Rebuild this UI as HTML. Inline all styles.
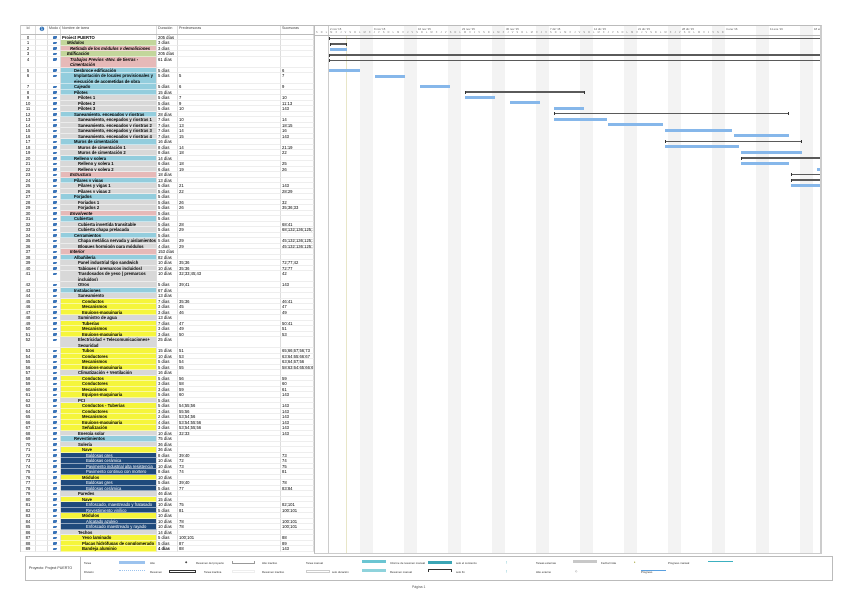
<!DOCTYPE html>
<html><head><meta charset="utf-8"><style>
*{margin:0;padding:0;box-sizing:border-box}
body{width:848px;height:600px;background:#fff;position:relative;overflow:hidden;font-family:"Liberation Sans",sans-serif;color:#000}
#tbl{position:absolute;left:20px;top:25px;width:294px;border-left:1px solid #ccc}
.r{display:grid;grid-template-columns:15px 12px 13px 96px 21px 103px 33px;height:5.51px;font-size:4.2px;line-height:5.51px;white-space:nowrap}
.r.d{height:11.02px}
.r>i{font-style:normal;border-right:1px solid #ddd;border-bottom:1px solid #eee;overflow:hidden;padding-left:1px}
.r>i:first-child{text-align:center;padding:0}
.r>i.n{font-weight:bold;border-bottom:1px solid rgba(255,255,255,.5)}
.d>i.n{white-space:normal;line-height:5.2px;padding-top:.3px}
.h{height:9.5px;border-top:1px solid #bbb;border-bottom:1px solid #bbb;line-height:4.5px;font-size:3.6px;color:#444}
.h>i{border-bottom:none!important}
.m{display:block;width:4px;height:2.5px;background:#3a74b8;margin:1.5px auto 0;border-radius:1px 0 2px 0}
.g{background:#c3d69b}.p{background:#e6b9b8}.b{background:#93cddd}.y{background:#f5f53b}.k{background:#d8d8d8}.db{background:#1f4a7c;color:#fff;font-weight:normal!important}
.it{font-style:italic!important}
#gantt{position:absolute;left:314px;top:25px;width:508px;height:529px;border-left:1px solid #bbb;border-right:2px solid #ccc;border-top:1px solid #bbb;border-bottom:1px solid #ccc;overflow:hidden}
.st{position:absolute;top:0;width:13px;height:529px;background:#f3f3f3}
.gh{position:absolute;left:0;top:0;width:508px;height:9.5px;border-bottom:1px solid #bbb}
.wl{position:absolute;top:0.5px;font-size:2.8px;color:#555}
.dl{position:absolute;top:5px;font-size:2.4px;color:#777;letter-spacing:3.2px}
.bar{position:absolute;height:3px;background:#86b7ea}
.sm{position:absolute;height:1.5px;background:#5a5a5a}
.sm:before,.sm:after{content:"";position:absolute;top:-.5px;width:1.2px;height:3px;background:#333}
.sm:before{left:0}.sm:after{right:0}
#leg{position:absolute;left:25px;top:556px;width:808px;height:25px;border:1px solid #bbb;font-size:3px;color:#333}
#leg .lc{position:absolute;left:0;top:0;width:55px;height:23px;border-right:1px solid #bbb;line-height:23px;padding-left:3px;font-size:3.6px}
.li{position:absolute;font-size:2.8px}
.ls{position:absolute;height:2.5px}
</style></head><body>
<div id="tbl">
<div class="r h"><i>Id</i><i style="text-align:center;font-size:6px;color:#2a6db5;line-height:9px">&#10102;</i><i>Modo de tarea</i><i>Nombre de tarea</i><i>Duración</i><i>Predecesoras</i><i>Sucesoras</i></div>
<div class="r"><i>0</i><i></i><i><b class="m"></b></i><i class="n" style="padding-left:1px">Project PUERTO</i><i>205 días</i><i></i><i></i></div>
<div class="r"><i>1</i><i></i><i><b class="m"></b></i><i class="n g it" style="padding-left:6px">Módulos</i><i>3 días</i><i></i><i></i></div>
<div class="r"><i>2</i><i></i><i><b class="m"></b></i><i class="n p it" style="padding-left:9px">Retirada de los módulos y demoliciones</i><i>3 días</i><i></i><i></i></div>
<div class="r"><i>3</i><i></i><i><b class="m"></b></i><i class="n g it" style="padding-left:6px">Edificación</i><i>205 días</i><i></i><i></i></div>
<div class="r d"><i>4</i><i></i><i><b class="m"></b></i><i class="n p it" style="padding-left:9px">Trabajos Previos -Mov. de tierras - Cimentación</i><i>61 días</i><i></i><i></i></div>
<div class="r"><i>5</i><i></i><i><b class="m"></b></i><i class="n b" style="padding-left:13px">Desbroce edificación</i><i>5 días</i><i></i><i>6</i></div>
<div class="r d"><i>6</i><i></i><i><b class="m"></b></i><i class="n b" style="padding-left:13px">Implantación de locales provisionales y ejecución de acometidas de obra</i><i>5 días</i><i>5</i><i>7</i></div>
<div class="r"><i>7</i><i></i><i><b class="m"></b></i><i class="n b" style="padding-left:13px">Cajeado</i><i>5 días</i><i>6</i><i>9</i></div>
<div class="r"><i>8</i><i></i><i><b class="m"></b></i><i class="n b" style="padding-left:13px">Pilotes</i><i>15 días</i><i></i><i></i></div>
<div class="r"><i>9</i><i></i><i><b class="m"></b></i><i class="n k" style="padding-left:17px">Pilotes 1</i><i>5 días</i><i>7</i><i>10</i></div>
<div class="r"><i>10</i><i></i><i><b class="m"></b></i><i class="n k" style="padding-left:17px">Pilotes 2</i><i>5 días</i><i>9</i><i>11;13</i></div>
<div class="r"><i>11</i><i></i><i><b class="m"></b></i><i class="n k" style="padding-left:17px">Pilotes 3</i><i>5 días</i><i>10</i><i>143</i></div>
<div class="r"><i>12</i><i></i><i><b class="m"></b></i><i class="n b" style="padding-left:13px">Saneamiento, encepados y riostras</i><i>28 días</i><i></i><i></i></div>
<div class="r"><i>13</i><i></i><i><b class="m"></b></i><i class="n k" style="padding-left:17px">Saneamiento, encepados y riostras 1</i><i>7 días</i><i>10</i><i>14</i></div>
<div class="r"><i>14</i><i></i><i><b class="m"></b></i><i class="n k" style="padding-left:17px">Saneamiento, encepados y riostras 2</i><i>7 días</i><i>13</i><i>18;15</i></div>
<div class="r"><i>15</i><i></i><i><b class="m"></b></i><i class="n k" style="padding-left:17px">Saneamiento, encepados y riostras 3</i><i>7 días</i><i>14</i><i>16</i></div>
<div class="r"><i>16</i><i></i><i><b class="m"></b></i><i class="n k" style="padding-left:17px">Saneamiento, encepados y riostras 4</i><i>7 días</i><i>15</i><i>143</i></div>
<div class="r"><i>17</i><i></i><i><b class="m"></b></i><i class="n b" style="padding-left:13px">Muros de cimentación</i><i>16 días</i><i></i><i></i></div>
<div class="r"><i>18</i><i></i><i><b class="m"></b></i><i class="n k" style="padding-left:17px">Muros de cimentación 1</i><i>8 días</i><i>14</i><i>21;19</i></div>
<div class="r"><i>19</i><i></i><i><b class="m"></b></i><i class="n k" style="padding-left:17px">Muros de cimentación 2</i><i>8 días</i><i>18</i><i>22</i></div>
<div class="r"><i>20</i><i></i><i><b class="m"></b></i><i class="n b" style="padding-left:13px">Relleno y solera</i><i>14 días</i><i></i><i></i></div>
<div class="r"><i>21</i><i></i><i><b class="m"></b></i><i class="n k" style="padding-left:17px">Relleno y solera 1</i><i>6 días</i><i>18</i><i>25</i></div>
<div class="r"><i>22</i><i></i><i><b class="m"></b></i><i class="n k" style="padding-left:17px">Relleno y solera 2</i><i>6 días</i><i>19</i><i>26</i></div>
<div class="r"><i>23</i><i></i><i><b class="m"></b></i><i class="n p it" style="padding-left:9px">Estructura</i><i>18 días</i><i></i><i></i></div>
<div class="r"><i>24</i><i></i><i><b class="m"></b></i><i class="n b" style="padding-left:13px">Pilares y vigas</i><i>13 días</i><i></i><i></i></div>
<div class="r"><i>25</i><i></i><i><b class="m"></b></i><i class="n k" style="padding-left:17px">Pilares y vigas 1</i><i>5 días</i><i>21</i><i>143</i></div>
<div class="r"><i>26</i><i></i><i><b class="m"></b></i><i class="n k" style="padding-left:17px">Pilares y vigas 2</i><i>5 días</i><i>22</i><i>28;29</i></div>
<div class="r"><i>27</i><i></i><i><b class="m"></b></i><i class="n b" style="padding-left:13px">Forjados</i><i>5 días</i><i></i><i></i></div>
<div class="r"><i>28</i><i></i><i><b class="m"></b></i><i class="n k" style="padding-left:17px">Forjados 1</i><i>5 días</i><i>26</i><i>32</i></div>
<div class="r"><i>29</i><i></i><i><b class="m"></b></i><i class="n k" style="padding-left:17px">Forjados 2</i><i>5 días</i><i>26</i><i>35;36;33</i></div>
<div class="r"><i>30</i><i></i><i><b class="m"></b></i><i class="n p it" style="padding-left:9px">Envolvente</i><i>5 días</i><i></i><i></i></div>
<div class="r"><i>31</i><i></i><i><b class="m"></b></i><i class="n b" style="padding-left:13px">Cubiertas</i><i>5 días</i><i></i><i></i></div>
<div class="r"><i>32</i><i></i><i><b class="m"></b></i><i class="n k" style="padding-left:17px">Cubierta invertida transitable</i><i>5 días</i><i>28</i><i>68;41</i></div>
<div class="r"><i>33</i><i></i><i><b class="m"></b></i><i class="n k" style="padding-left:17px">Cubierta chapa prelacada</i><i>5 días</i><i>29</i><i>68;132;136;125;141;</i></div>
<div class="r"><i>34</i><i></i><i><b class="m"></b></i><i class="n b" style="padding-left:13px">Cerramientos</i><i>5 días</i><i></i><i></i></div>
<div class="r"><i>35</i><i></i><i><b class="m"></b></i><i class="n k" style="padding-left:17px">Chapa metálica nervada y aislamientos</i><i>5 días</i><i>29</i><i>45;132;136;125;141;</i></div>
<div class="r"><i>36</i><i></i><i><b class="m"></b></i><i class="n k" style="padding-left:17px">Bloques hormigón para módulos</i><i>4 días</i><i>29</i><i>45;132;136;125;141;</i></div>
<div class="r"><i>37</i><i></i><i><b class="m"></b></i><i class="n p it" style="padding-left:9px">Interior</i><i>153 días</i><i></i><i></i></div>
<div class="r"><i>38</i><i></i><i><b class="m"></b></i><i class="n b" style="padding-left:13px">Albañilería</i><i>82 días</i><i></i><i></i></div>
<div class="r"><i>39</i><i></i><i><b class="m"></b></i><i class="n k" style="padding-left:17px">Panel industrial tipo sandwich</i><i>10 días</i><i>35;36</i><i>72;77;42</i></div>
<div class="r"><i>40</i><i></i><i><b class="m"></b></i><i class="n k" style="padding-left:17px">Tabiques ( premarcos incluidos)</i><i>10 días</i><i>35;36</i><i>72;77</i></div>
<div class="r d"><i>41</i><i></i><i><b class="m"></b></i><i class="n k" style="padding-left:17px">Trasdosados de yeso ( premarcos incluidos)</i><i>10 días</i><i>32;33;45;43</i><i>42</i></div>
<div class="r"><i>42</i><i></i><i><b class="m"></b></i><i class="n k" style="padding-left:17px">Otros</i><i>5 días</i><i>39;41</i><i>143</i></div>
<div class="r"><i>43</i><i></i><i><b class="m"></b></i><i class="n b" style="padding-left:13px">Instalaciones</i><i>67 días</i><i></i><i></i></div>
<div class="r"><i>44</i><i></i><i><b class="m"></b></i><i class="n k" style="padding-left:17px">Saneamiento</i><i>13 días</i><i></i><i></i></div>
<div class="r"><i>45</i><i></i><i><b class="m"></b></i><i class="n y" style="padding-left:21px">Conductos</i><i>7 días</i><i>35;36</i><i>46;41</i></div>
<div class="r"><i>46</i><i></i><i><b class="m"></b></i><i class="n y" style="padding-left:21px">Mecanismos</i><i>3 días</i><i>45</i><i>47</i></div>
<div class="r"><i>47</i><i></i><i><b class="m"></b></i><i class="n y" style="padding-left:21px">Equipos-maquinaria</i><i>3 días</i><i>46</i><i>49</i></div>
<div class="r"><i>48</i><i></i><i><b class="m"></b></i><i class="n k" style="padding-left:17px">Suministro de agua</i><i>13 días</i><i></i><i></i></div>
<div class="r"><i>49</i><i></i><i><b class="m"></b></i><i class="n y" style="padding-left:21px">Tuberías</i><i>7 días</i><i>47</i><i>50;41</i></div>
<div class="r"><i>50</i><i></i><i><b class="m"></b></i><i class="n y" style="padding-left:21px">Mecanismos</i><i>3 días</i><i>49</i><i>51</i></div>
<div class="r"><i>51</i><i></i><i><b class="m"></b></i><i class="n y" style="padding-left:21px">Equipos-maquinaria</i><i>3 días</i><i>50</i><i>53</i></div>
<div class="r d"><i>52</i><i></i><i><b class="m"></b></i><i class="n k" style="padding-left:17px">Electricidad + Telecomunicaciones+ Seguridad</i><i>25 días</i><i></i><i></i></div>
<div class="r"><i>53</i><i></i><i><b class="m"></b></i><i class="n y" style="padding-left:21px">Tubos</i><i>15 días</i><i>51</i><i>65;66;67;56;73</i></div>
<div class="r"><i>54</i><i></i><i><b class="m"></b></i><i class="n y" style="padding-left:21px">Conductores</i><i>10 días</i><i>53</i><i>63;64;65;66;67</i></div>
<div class="r"><i>55</i><i></i><i><b class="m"></b></i><i class="n y" style="padding-left:21px">Mecanismos</i><i>5 días</i><i>54</i><i>63;64;67;56</i></div>
<div class="r"><i>56</i><i></i><i><b class="m"></b></i><i class="n y" style="padding-left:21px">Equipos-maquinaria</i><i>5 días</i><i>55</i><i>58;63;64;65;66;67</i></div>
<div class="r"><i>57</i><i></i><i><b class="m"></b></i><i class="n k" style="padding-left:17px">Climatización + Ventilación</i><i>16 días</i><i></i><i></i></div>
<div class="r"><i>58</i><i></i><i><b class="m"></b></i><i class="n y" style="padding-left:21px">Conductos</i><i>5 días</i><i>56</i><i>59</i></div>
<div class="r"><i>59</i><i></i><i><b class="m"></b></i><i class="n y" style="padding-left:21px">Conductores</i><i>3 días</i><i>58</i><i>60</i></div>
<div class="r"><i>60</i><i></i><i><b class="m"></b></i><i class="n y" style="padding-left:21px">Mecanismos</i><i>3 días</i><i>59</i><i>61</i></div>
<div class="r"><i>61</i><i></i><i><b class="m"></b></i><i class="n y" style="padding-left:21px">Equipos-maquinaria</i><i>5 días</i><i>60</i><i>143</i></div>
<div class="r"><i>62</i><i></i><i><b class="m"></b></i><i class="n k" style="padding-left:17px">PCI</i><i>5 días</i><i></i><i></i></div>
<div class="r"><i>63</i><i></i><i><b class="m"></b></i><i class="n y" style="padding-left:21px">Conductos - Tuberías</i><i>5 días</i><i>54;55;56</i><i>143</i></div>
<div class="r"><i>64</i><i></i><i><b class="m"></b></i><i class="n y" style="padding-left:21px">Conductores</i><i>3 días</i><i>55;56</i><i>143</i></div>
<div class="r"><i>65</i><i></i><i><b class="m"></b></i><i class="n y" style="padding-left:21px">Mecanismos</i><i>2 días</i><i>53;54;56</i><i>143</i></div>
<div class="r"><i>66</i><i></i><i><b class="m"></b></i><i class="n y" style="padding-left:21px">Equipos-maquinaria</i><i>4 días</i><i>53;54;55;56</i><i>143</i></div>
<div class="r"><i>67</i><i></i><i><b class="m"></b></i><i class="n y" style="padding-left:21px">Señalización</i><i>3 días</i><i>53;54;55;56</i><i>143</i></div>
<div class="r"><i>68</i><i></i><i><b class="m"></b></i><i class="n k" style="padding-left:17px">Energía solar</i><i>10 días</i><i>32;33</i><i>143</i></div>
<div class="r"><i>69</i><i></i><i><b class="m"></b></i><i class="n b" style="padding-left:13px">Revestimientos</i><i>75 días</i><i></i><i></i></div>
<div class="r"><i>70</i><i></i><i><b class="m"></b></i><i class="n k" style="padding-left:17px">Solería</i><i>36 días</i><i></i><i></i></div>
<div class="r"><i>71</i><i></i><i><b class="m"></b></i><i class="n y" style="padding-left:21px">Nave</i><i>36 días</i><i></i><i></i></div>
<div class="r"><i>72</i><i></i><i><b class="m"></b></i><i class="n db" style="padding-left:25px">Baldosas gres</i><i>8 días</i><i>39;40</i><i>73</i></div>
<div class="r"><i>73</i><i></i><i><b class="m"></b></i><i class="n db" style="padding-left:25px">Baldosas cerámica</i><i>10 días</i><i>72</i><i>74</i></div>
<div class="r"><i>74</i><i></i><i><b class="m"></b></i><i class="n db" style="padding-left:25px">Pavimento industrial alta resistencia</i><i>10 días</i><i>73</i><i>75</i></div>
<div class="r"><i>75</i><i></i><i><b class="m"></b></i><i class="n db" style="padding-left:25px">Pavimento continuo con mortero</i><i>8 días</i><i>74</i><i>81</i></div>
<div class="r"><i>76</i><i></i><i><b class="m"></b></i><i class="n y" style="padding-left:21px">Módulos</i><i>10 días</i><i></i><i></i></div>
<div class="r"><i>77</i><i></i><i><b class="m"></b></i><i class="n db" style="padding-left:25px">Baldosas gres</i><i>5 días</i><i>39;40</i><i>78</i></div>
<div class="r"><i>78</i><i></i><i><b class="m"></b></i><i class="n db" style="padding-left:25px">Baldosas cerámica</i><i>5 días</i><i>77</i><i>83;84</i></div>
<div class="r"><i>79</i><i></i><i><b class="m"></b></i><i class="n k" style="padding-left:17px">Paredes</i><i>46 días</i><i></i><i></i></div>
<div class="r"><i>80</i><i></i><i><b class="m"></b></i><i class="n y" style="padding-left:21px">Nave</i><i>15 días</i><i></i><i></i></div>
<div class="r"><i>81</i><i></i><i><b class="m"></b></i><i class="n db" style="padding-left:25px">Enfoscado, maestreado y fratasado</i><i>10 días</i><i>75</i><i>82;101</i></div>
<div class="r"><i>82</i><i></i><i><b class="m"></b></i><i class="n db" style="padding-left:25px">Revestimiento vinílico</i><i>5 días</i><i>81</i><i>100;101</i></div>
<div class="r"><i>83</i><i></i><i><b class="m"></b></i><i class="n y" style="padding-left:21px">Módulos</i><i>10 días</i><i></i><i></i></div>
<div class="r"><i>84</i><i></i><i><b class="m"></b></i><i class="n db" style="padding-left:25px">Alicatado azulejo</i><i>10 días</i><i>78</i><i>100;101</i></div>
<div class="r"><i>85</i><i></i><i><b class="m"></b></i><i class="n db" style="padding-left:25px">Enfoscado maestreado y rayado</i><i>10 días</i><i>78</i><i>100;101</i></div>
<div class="r"><i>86</i><i></i><i><b class="m"></b></i><i class="n k" style="padding-left:17px">Techos</i><i>14 días</i><i></i><i></i></div>
<div class="r"><i>87</i><i></i><i><b class="m"></b></i><i class="n y" style="padding-left:21px">Yeso laminado</i><i>5 días</i><i>100;101</i><i>88</i></div>
<div class="r"><i>88</i><i></i><i><b class="m"></b></i><i class="n y" style="padding-left:21px">Placas hidrófugas de conglomerado</i><i>5 días</i><i>87</i><i>89</i></div>
<div class="r"><i>89</i><i></i><i><b class="m"></b></i><i class="n y" style="padding-left:21px">Bandeja aluminio</i><i style="font-weight:bold">4 días</i><i>88</i><i>143</i></div>
</div>

<div id="gantt">
<div class="st" style="left:45px"></div><div class="st" style="left:89px"></div><div class="st" style="left:133px"></div><div class="st" style="left:177px"></div><div class="st" style="left:221px"></div><div class="st" style="left:265px"></div><div class="st" style="left:309px"></div><div class="st" style="left:353px"></div><div class="st" style="left:397px"></div><div class="st" style="left:441px"></div><div class="st" style="left:485px"></div>
<div style="position:absolute;left:31px;top:10px;width:.6px;height:520px;background:#e8e6c8"></div>
<div style="position:absolute;left:13px;top:0;width:.6px;height:529px;background:#ccc"></div>
<div class="gh">
<span class="wl" style="left:15px">2 nov '15</span><span class="wl" style="left:59px">9 nov '15</span><span class="wl" style="left:103px">16 nov '15</span><span class="wl" style="left:147px">23 nov '15</span><span class="wl" style="left:191px">30 nov '15</span><span class="wl" style="left:235px">7 dic '15</span><span class="wl" style="left:279px">14 dic '15</span><span class="wl" style="left:323px">21 dic '15</span><span class="wl" style="left:367px">28 dic '15</span><span class="wl" style="left:411px">4 ene '16</span><span class="wl" style="left:455px">11 ene '16</span><span class="wl" style="left:499px">18 ene</span>
<span class="dl" style="left:1px">SDLMXJVSDLMXJVSDLMXJVSDLMXJVSDLMXJVSDLMXJVSDLMXJVSDLMXJVSDLMXJVSDLMXJVSDLMXJVSDLMXJVSD</span>
</div>
<!-- bars: gantt top=25, x offset 314 -->
<div class="sm" style="left:14px;width:494px;top:11.5px"></div>
<div class="sm" style="left:15px;width:17px;top:17px"></div>
<div class="bar" style="left:15px;width:17px;top:21.5px"></div>
<div class="sm" style="left:14px;width:494px;top:28px"></div>
<div class="sm" style="left:14px;width:494px;top:33.5px"></div>
<div class="bar" style="left:14px;width:31px;top:43px"></div>
<div class="bar" style="left:60px;width:30px;top:49px"></div>
<div class="bar" style="left:105px;width:30px;top:59px"></div>
<div class="sm" style="left:150px;width:120px;top:65px"></div>
<div class="bar" style="left:150px;width:30px;top:69.5px"></div>
<div class="bar" style="left:195px;width:30px;top:75px"></div>
<div class="bar" style="left:239px;width:30px;top:80.5px"></div>
<div class="sm" style="left:239px;width:235px;top:86.5px"></div>
<div class="bar" style="left:239px;width:53px;top:91.5px"></div>
<div class="bar" style="left:293px;width:55px;top:97px"></div>
<div class="bar" style="left:350px;width:67px;top:102.5px"></div>
<div class="bar" style="left:419px;width:55px;top:108px"></div>
<div class="sm" style="left:350px;width:137px;top:114.5px"></div>
<div class="bar" style="left:350px;width:74px;top:119px"></div>
<div class="bar" style="left:426px;width:61px;top:124.5px"></div>
<div class="sm" style="left:426px;width:82px;top:131px"></div>
<div class="bar" style="left:426px;width:48px;top:136px"></div>
<div class="bar" style="left:502px;width:6px;top:141.5px"></div>
<div class="sm" style="left:476px;width:32px;top:147.5px"></div>
<div class="sm" style="left:476px;width:32px;top:153px"></div>
<div class="bar" style="left:476px;width:32px;top:158px"></div>
</div>

<div id="leg">
<div class="lc">Proyecto: Project PUERTO</div>
<span class="li" style="left:58px;top:4px">Tarea</span><span class="ls" style="left:93px;top:4px;width:26px;background:#9cc3ee"></span><span class="li" style="left:124px;top:4px">Hito</span>
<span class="li" style="left:58px;top:13px">División</span><span class="ls" style="left:93px;top:13px;width:26px;border-top:1px dotted #9cc3ee"></span><span class="li" style="left:124px;top:13px">Resumen</span>
<span class="li" style="left:159px;top:3px">&#9670;</span><span class="li" style="left:170px;top:4px">Resumen del proyecto</span>
<span class="ls" style="left:143px;top:13px;width:27px;border:1px solid #333;border-top-width:1.5px"></span><span class="li" style="left:178px;top:13px">Tarea inactiva</span>
<span class="ls" style="left:206px;top:4px;width:23px;border:1px solid #999;border-top:none"></span><span class="li" style="left:236px;top:4px">Hito inactivo</span><span class="li" style="left:236px;top:13px">Resumen inactivo</span>
<span class="ls" style="left:206px;top:13px;width:23px;border:1px solid #eee"></span>
<span class="li" style="left:280px;top:4px">Tarea manual</span><span class="ls" style="left:280px;top:13px;width:24px;border:1px solid #ccc"></span><span class="li" style="left:306px;top:13px">solo duración</span>
<span class="ls" style="left:336px;top:3px;width:24px;background:#6bc5d2"></span><span class="li" style="left:364px;top:4px">Informe de resumen manual</span>
<span class="ls" style="left:336px;top:12px;width:24px;background:#8fd3dc"></span><span class="li" style="left:364px;top:13px">Resumen manual</span>
<span class="ls" style="left:402px;top:4px;width:24px;background:#3aa5b5"></span><span class="li" style="left:430px;top:4px">solo el comienzo</span>
<span class="ls" style="left:402px;top:12px;width:24px;border:1px solid #333;border-bottom:none"></span><span class="li" style="left:430px;top:13px">solo fin</span>
<span class="li" style="left:480px;top:3px;color:#2a9fb0">[</span><span class="li" style="left:480px;top:12px;color:#2a9fb0">]</span>
<span class="li" style="left:510px;top:4px">Tareas externas</span><span class="li" style="left:510px;top:13px">Hito externo</span>
<span class="ls" style="left:547px;top:3px;width:24px;background:#c8c8c8"></span><span class="li" style="left:575px;top:4px">Fecha límite</span>
<span class="li" style="left:549px;top:12px">&#9671;</span>
<span class="li" style="left:608px;top:3px;color:#8a8a00">&#9830;</span><span class="li" style="left:615px;top:13px">Progreso</span>
<span class="li" style="left:642px;top:4px">Progreso manual</span>
<span class="ls" style="left:682px;top:3.5px;width:25px;height:1.2px;background:#3cb0c0"></span>
<span class="ls" style="left:615px;top:12.5px;width:25px;height:1.2px;background:#5aa0e0"></span>
</div>
<div style="position:absolute;left:412px;top:585px;font-size:3.4px;color:#555">Página 1</div>
</body></html>
